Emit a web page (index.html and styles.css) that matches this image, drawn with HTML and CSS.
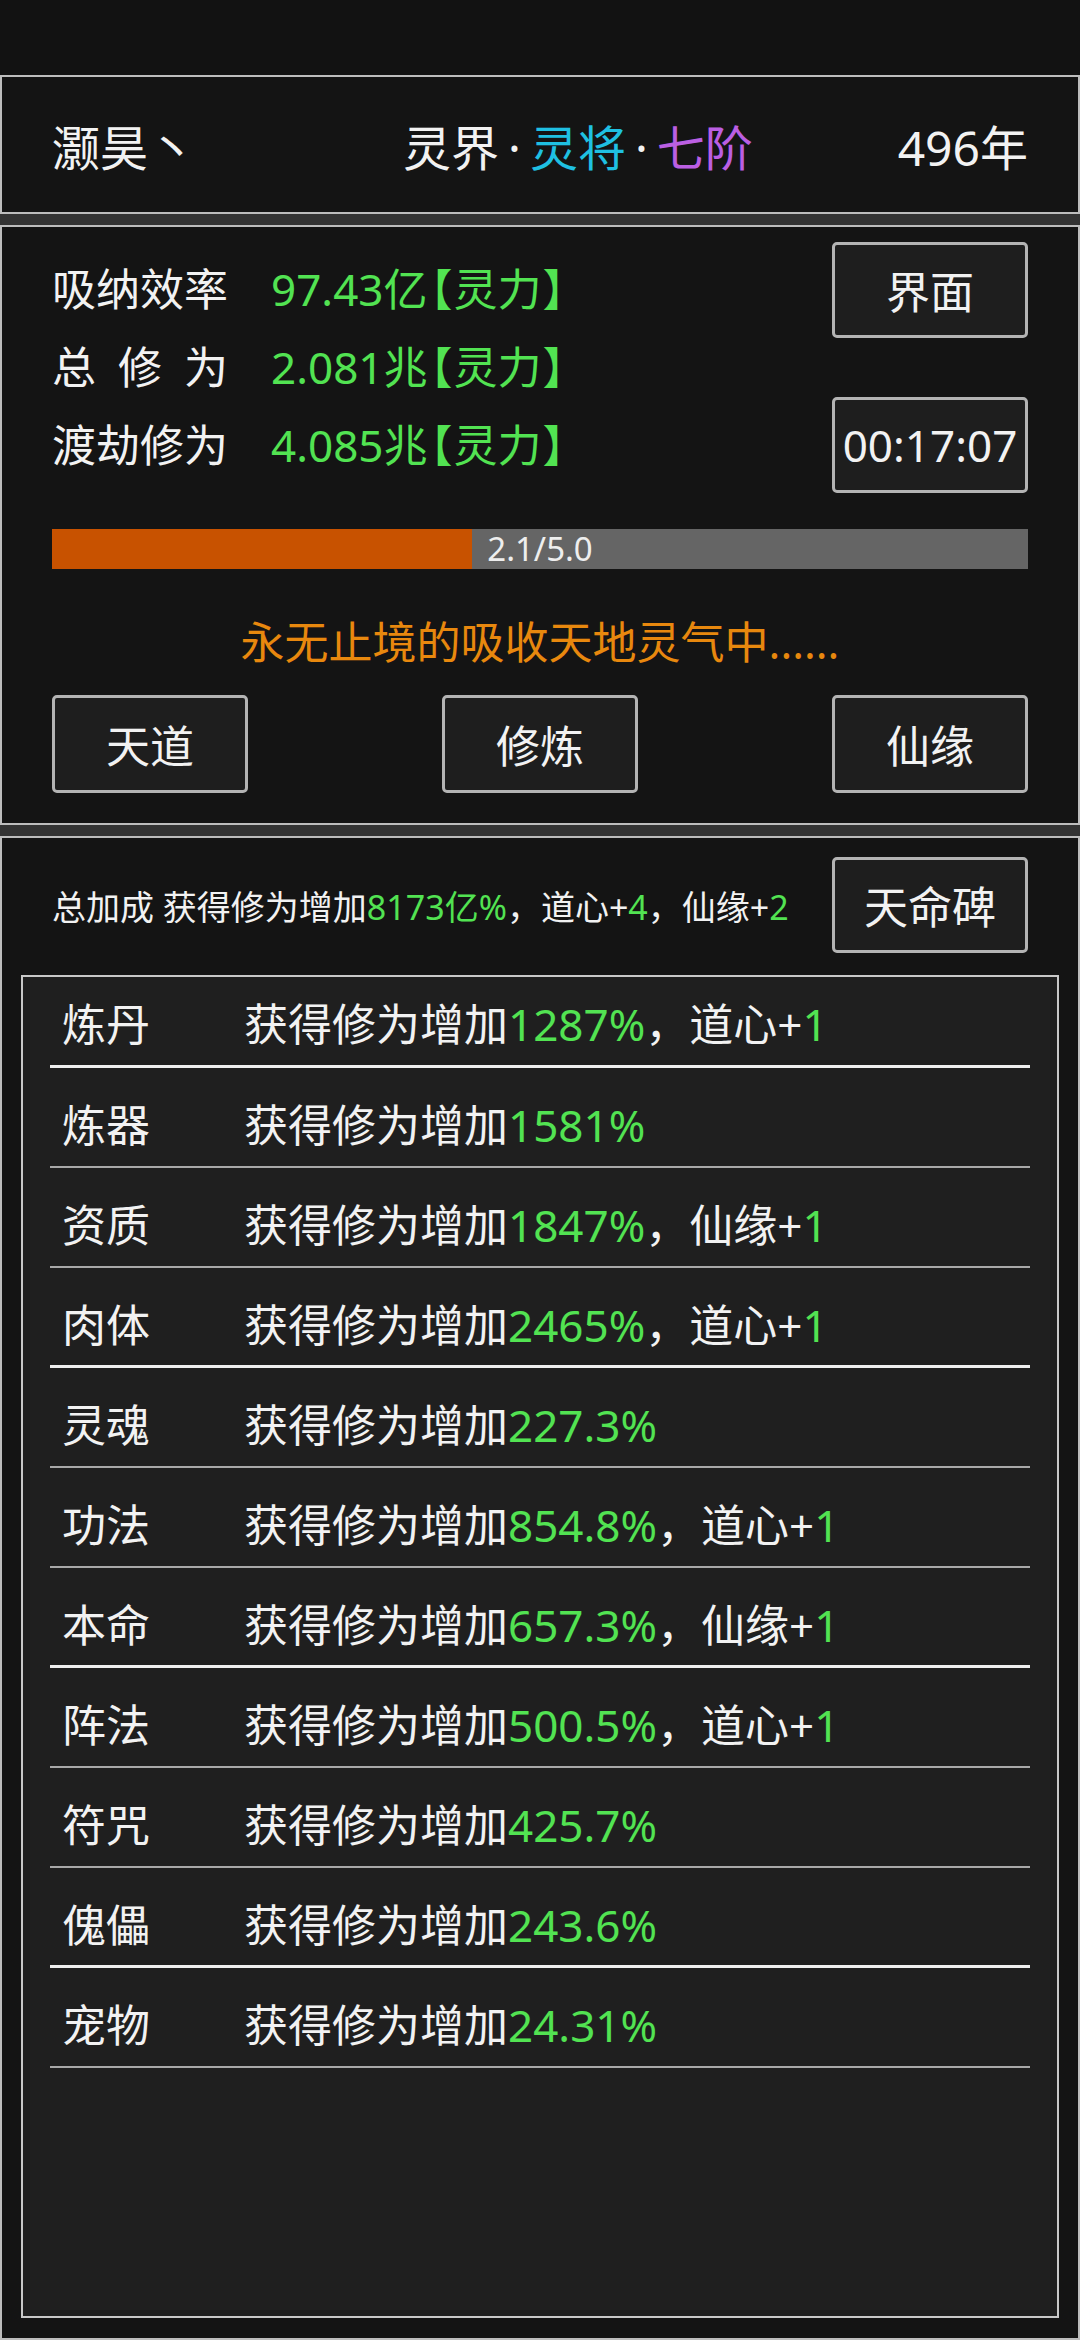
FILE: index.html
```html
<!DOCTYPE html>
<html lang="zh-CN">
<head>
<meta charset="utf-8">
<title>修仙</title>
<link rel="stylesheet" href="styles.css">
</head>
<body>
<div class="statusbar"></div>

<section class="panel header">
  <div class="name">灏昊丶</div>
  <div class="realm"><span>灵界</span><span class="dot">·</span><span class="cyan">灵将</span><span class="dot">·</span><span class="purple">七阶</span></div>
  <div class="age">496年</div>
</section>

<section class="panel main">
  <div class="top">
    <div class="stats">
      <div class="stat"><span class="label">吸纳效率</span><span class="val">97.43亿<span class="br">【</span>灵力<span class="br">】</span></span></div>
      <div class="stat"><span class="label spread"><span>总</span><span>修</span><span>为</span></span><span class="val">2.081兆<span class="br">【</span>灵力<span class="br">】</span></span></div>
      <div class="stat"><span class="label">渡劫修为</span><span class="val">4.085兆<span class="br">【</span>灵力<span class="br">】</span></span></div>
    </div>
    <div class="side">
      <div class="btn">界面</div>
      <div class="btn">00:17:07</div>
    </div>
  </div>
  <div class="bar">
    <div class="fill" style="width:43%"></div>
    <span class="bar-text">2.1/5.0</span>
  </div>
  <p class="msg">永无止境的吸收天地灵气中......</p>
  <div class="actions">
    <div class="btn tall">天道</div>
    <div class="btn tall">修炼</div>
    <div class="btn tall">仙缘</div>
  </div>
</section>

<section class="panel bonus">
  <div class="bonus-head">
    <div class="bonus-text">总加成 获得修为增加<span class="g">8173亿%</span>，道心+<span class="g">4</span>，仙缘+<span class="g">2</span></div>
    <div class="btn">天命碑</div>
  </div>
  <div class="list">
    <div class="row major"><span class="k">炼丹</span><span>获得修为增加<span class="g">1287%</span>，道心+<span class="g">1</span></span></div>
    <div class="row"><span class="k">炼器</span><span>获得修为增加<span class="g">1581%</span></span></div>
    <div class="row"><span class="k">资质</span><span>获得修为增加<span class="g">1847%</span>，仙缘+<span class="g">1</span></span></div>
    <div class="row major"><span class="k">肉体</span><span>获得修为增加<span class="g">2465%</span>，道心+<span class="g">1</span></span></div>
    <div class="row"><span class="k">灵魂</span><span>获得修为增加<span class="g">227.3%</span></span></div>
    <div class="row"><span class="k">功法</span><span>获得修为增加<span class="g">854.8%</span>，道心+<span class="g">1</span></span></div>
    <div class="row major"><span class="k">本命</span><span>获得修为增加<span class="g">657.3%</span>，仙缘+<span class="g">1</span></span></div>
    <div class="row"><span class="k">阵法</span><span>获得修为增加<span class="g">500.5%</span>，道心+<span class="g">1</span></span></div>
    <div class="row"><span class="k">符咒</span><span>获得修为增加<span class="g">425.7%</span></span></div>
    <div class="row major"><span class="k">傀儡</span><span>获得修为增加<span class="g">243.6%</span></span></div>
    <div class="row"><span class="k">宠物</span><span>获得修为增加<span class="g">24.31%</span></span></div>
  </div>
</section>
</body>
</html>
```

FILE: styles.css
```css
html, body {
  margin: 0;
  padding: 0;
}
body {
  width: 1080px;
  height: 2340px;
  overflow: hidden;
  background: #333333;
  font-family: "Noto Sans", "Noto Sans CJK SC", sans-serif;
  color: #f2f2f2;
}
.statusbar {
  height: 75px;
  background: #121212;
}
.panel {
  box-sizing: border-box;
  background: #141414;
  border: 2px solid #bdbdbd;
}
.header {
  height: 139px;
  display: flex;
  align-items: center;
  padding: 0 50px;
  font-size: 48px;
}
.name {
  width: 351px;
}
.dot {
  margin: 0 9px;
}
.cyan { color: #1fc0e2; }
.purple { color: #bb5fe3; }
.age {
  margin-left: auto;
}
.g, .val { color: #52e352; }
.br {
  font-feature-settings: "palt";
  margin: 0 2px;
}

.main {
  margin-top: 11px;
  height: 600px;
  padding: 0 50px;
}
.top {
  display: flex;
  justify-content: space-between;
}
.stats {
  padding-top: 23px;
  font-size: 44px;
  line-height: 78px;
}
.stat {
  display: flex;
}
.label {
  width: 176px;
  margin-right: 43px;
}
.spread {
  display: flex;
  justify-content: space-between;
}
.side {
  display: flex;
  flex-direction: column;
  gap: 59px;
  padding-top: 15px;
}
.btn {
  box-sizing: border-box;
  width: 196px;
  height: 96px;
  border: 3px solid #b4b4b4;
  border-radius: 5px;
  background: #1e1e1e;
  color: #f2f2f2;
  font-size: 44px;
  display: flex;
  align-items: center;
  justify-content: center;
}
.btn.tall {
  height: 98px;
}
.bar {
  position: relative;
  margin-top: 36px;
  height: 40px;
  background: #656565;
}
.fill {
  height: 100%;
  background: #c85200;
}
.bar-text {
  position: absolute;
  left: 0;
  right: 0;
  top: 0;
  text-align: center;
  line-height: 40px;
  font-size: 33px;
  color: #eeeeee;
}
.msg {
  margin: 43px 0 0;
  line-height: 60px;
  text-align: center;
  font-size: 44px;
  color: #e8880e;
}
.actions {
  margin-top: 23px;
  display: flex;
  justify-content: space-between;
}

.bonus {
  margin-top: 11px;
  height: 1504px;
  padding: 19px 19px 20px;
  display: flex;
  flex-direction: column;
}
.bonus-head {
  display: flex;
  align-items: center;
  justify-content: space-between;
  padding: 0 31px;
}
.bonus-text {
  font-size: 34px;
}
.list {
  margin-top: 22px;
  flex: 1;
  border: 2px solid #c8c8c8;
  background: #1f1f1f;
  padding: 0 27px;
}
.row {
  box-sizing: border-box;
  height: 100px;
  padding: 35px 0 0 12px;
  display: flex;
  font-size: 44px;
  line-height: 44px;
  border-bottom: 2px solid #a8a8a8;
}
.row.major {
  border-bottom: 3px solid #eeeeee;
}
.row:first-child {
  height: 91px;
  padding-top: 25px;
}
.k {
  width: 182px;
}
```
